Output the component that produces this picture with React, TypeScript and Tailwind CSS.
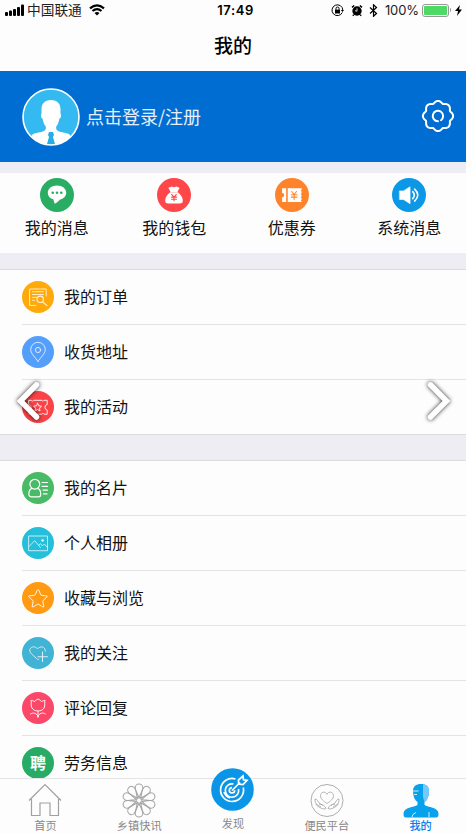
import type { ReactNode } from "react";

const font = "font-['Noto_Sans_CJK_SC',sans-serif]";

function Disc({ color, children }: { color: string; children: ReactNode }) {
  return (
    <svg
      viewBox="0 0 32 32"
      className={`size-8 shrink-0 ${color}`}
      fill="none"
      stroke="white"
      strokeWidth="0.9"
      strokeLinecap="round"
      strokeLinejoin="round"
    >
      <circle cx="16" cy="16" r="16" fill="currentColor" stroke="none" />
      {children}
    </svg>
  );
}

const orders = [
  {
    label: "我的订单",
    icon: (
      <Disc color="text-[#ffaa0a]">
        <g opacity="0.85">
          <path d="M14 24.4H7.6V8h16.6v7M10.5 10.7h11M10.5 13.5h11M10.5 16.4h4M10.5 19.3h2" />
          <circle cx="18.2" cy="18.3" r="3.2" strokeWidth="1.1" />
          <path d="M20.8 21l4.2 3.6" strokeWidth="1.2" />
        </g>
      </Disc>
    ),
  },
  {
    label: "收货地址",
    icon: (
      <Disc color="text-[#549ffb]">
        <g opacity="0.85">
          <path d="M16 25.3C14 22.2 8.7 17.8 8.7 13.6a7.3 7.3 0 0 1 14.6 0C23.3 17.8 18 22.2 16 25.3z" />
          <circle cx="16" cy="14" r="2.6" />
        </g>
      </Disc>
    ),
  },
  {
    label: "我的活动",
    icon: (
      <Disc color="text-[#fb4246]">
        <path d="M7 9.3h2.5l1 1 1-1h8.5l1 1 1-1h3.2v4.2a2.8 2.8 0 0 0 0 5.5v4.2H22l-1-1-1 1h-8.5l-1-1-1 1H7V19a2.8 2.8 0 0 0 0-5.5z" />
        <path d="M15.6 12.3l1.2 2.5 2.7.4-2 2 .5 2.7-2.4-1.3-2.5 1.3.5-2.7-2-2 2.700-.4z" />
      </Disc>
    ),
  },
];

const services = [
  {
    label: "我的名片",
    icon: (
      <Disc color="text-[#49bb66]">
        <circle cx="12.8" cy="12.2" r="4.9" strokeWidth="1.2" />
        <path d="M9.9 16.4c-2.6 1-3.2 3.5-3 6.5.2 1.6 1 1.9 2.4 1.9h7.2c1.5 0 2.2-.5 2.2-2 .2-3-.5-5.5-3-6.4" strokeWidth="1.2" />
        <path d="M20 10.5h5.5M20 14.3h5.5M21 18.1h4.5M21.5 21.9H25" strokeWidth="1.2" />
      </Disc>
    ),
  },
  {
    label: "个人相册",
    icon: (
      <Disc color="text-[#25bfdc]">
        <g opacity="0.8">
          <path d="M7 9h18.5v14.7H7z" />
          <path d="M7 19.5l5.7-5.8 5.7 6.8M16.7 18.3l1.6-1.7 2.2 2.3 1.8-1.8 3.2 3.4" />
          <circle cx="20.6" cy="13.4" r="1" fill="white" />
        </g>
      </Disc>
    ),
  },
  {
    label: "收藏与浏览",
    icon: (
      <Disc color="text-[#ff9a12]">
        <path d="M15.2 8.2q.8-1.5 1.6 0l1.9 4.5q.2.5.8.6l4.9.5q1.5.2.4 1.3l-3.7 3.5q-.4.4-.3.9l1 4.6q.2 1.4-1.1.7l-4.1-2.5q-.6-.3-1.2 0l-4.1 2.5q-1.3.7-1.1-.7l1-4.6q.1-.5-.3-.9l-3.7-3.5q-1.1-1.1.4-1.3l4.9-.5q.6-.1.8-.6z" />
      </Disc>
    ),
  },
  {
    label: "我的关注",
    icon: (
      <Disc color="text-[#41b4d5]">
        <g opacity="0.8">
          <path d="M17 22.3c-.6.5-1 .4-1.6-.1L9.6 17c-4.7-4.2.7-9.6 5-6 .8.6 1.2.6 2 0 3.3-2.6 7.2-.3 6.7 3.3" />
          <path d="M20.500 15v9.500M16 19.800h9.400" strokeWidth="1.1" />
        </g>
      </Disc>
    ),
  },
  {
    label: "评论回复",
    icon: (
      <Disc color="text-[#fb4768]">
        <path d="M12.5 9.5c-1.5-.8-3-1.2-3.6-1.1C10 10 8.3 13.5 10 16c1.3 2 3.3 3 6 3s4.700-1 6-3c1.700-2.500 0-6 1.100-7.600-.6-.1-2.100.3-3.600 1.100C19 9 17.500 7.500 16 7c-1.500.5-3 2-3.500 2.500M16 19v6.500M16 24.500c-1-3-4.500-4.800-7.500-2.500M16 24.500c1-3 4.500-4.800 7.500-2.500" />
      </Disc>
    ),
  },
  {
    label: "劳务信息",
    icon: (
      <div className="flex size-8 shrink-0 items-center justify-center rounded-full bg-[#28ab64] pb-0.5 text-[16px] font-bold leading-none text-white">
        聘
      </div>
    ),
  },
];

const shortcuts = [
  {
    label: "我的消息",
    icon: (
      <Disc color="text-[#28ad62]">
        <path d="M16 7c-5 0-8.700 3-8.700 6.800 0 3 2.100 5.300 5.200 6.300l1.300 4.200c2-1 3.500-2.300 4.700-3.900 3.700-.8 6.200-3.500 6.200-6.600C24.700 10 21 7 16 7z" fill="white" stroke="none" />
        <g className="fill-[#28ad62]" stroke="none">
          <circle cx="12" cy="13.8" r="1.2" />
          <circle cx="16" cy="13.8" r="1.2" />
          <circle cx="20" cy="13.8" r="1.2" />
        </g>
      </Disc>
    ),
  },
  {
    label: "我的钱包",
    icon: (
      <Disc color="text-[#ff4648]">
        <path d="M12 8.600l1.700-.5 2.300.6 2.300-.6 1.700.5c1.500 0 1.500 1 .5 2l-1.300 2.500h-6.400l-1.300-2.500c-1-1-1-2 .5-2zM12.500 13.500h7c3.300 2.500 4.900 5.200 4.800 8-.1 2-1 2.500-3 2.500H10.700c-2 0-3-.5-3-2.500-.1-2.800 1.500-5.500 4.800-8z" fill="white" stroke="none" />
        <path d="M13.800 15.500L16 18l2.200-2.500M13.700 18h4.600M13.700 20h4.600M16 18v3.500" className="stroke-[#ff4648]" strokeWidth="1" />
      </Disc>
    ),
  },
  {
    label: "优惠券",
    icon: (
      <Disc color="text-[#ff832b]">
        <path d="M6.700 9.700h3.800v13H6.700v-4.500a2 2 0 0 0 0-4zM12 9.700h13v1.700l-.9.700.9.700v1.600l-.9.700.9.700v1.600l-.9.700.9.700v1.600l-.9.700.9.700v.9H12z" fill="white" stroke="none" />
        <path d="M15.700 12.700l2.300 2.800 2.300-2.800M15.400 15.700h5.200M15.400 18h5.200M18 15.500v4.700" className="stroke-[#ff832b]" strokeWidth="1" />
      </Disc>
    ),
  },
  {
    label: "系统消息",
    icon: (
      <Disc color="text-[#0c98e7]">
        <path d="M7.300 12.200h3.500L17 8.300v15.900l-6.200-4H7.300z" fill="white" strokeWidth="0.6" />
        <path d="M19.500 12.800q3 3.300 0 6.600M21.300 10.500q6 5.600 0 11.200" strokeWidth="1.5" />
      </Disc>
    ),
  },
];

// Outline of the settings gear: eight rounded lobes around the centre.
const gear = Array.from({ length: 161 }, (_, i) => {
  const a = (i / 160) * Math.PI * 2;
  const r = 12 + 3.1 * Math.sqrt(Math.cos(4 * a) ** 2 * 0.9 + 0.1);
  return `${(17 + r * Math.sin(a)).toFixed(2)},${(17 - r * Math.cos(a)).toFixed(2)}`;
}).join(" ");

function StatusBar() {
  return (
    <div className="flex h-5 shrink-0 items-center justify-between pr-1 pl-[5px] text-black">
      <div className="flex w-[190px] items-center">
        <svg viewBox="0 0 19 12" className="h-3 w-[19px]">
          <rect x="0" y="8" width="3" height="4" rx="1" />
          <rect x="4" y="6.5" width="3" height="5.5" rx="1" />
          <rect x="8" y="5" width="3" height="7" rx="1" />
          <rect x="12" y="3" width="3" height="9" rx="1" />
          <rect x="16" y="0.5" width="3" height="11.5" rx="1" />
        </svg>
        <span className="-mt-0.5 ml-[3px] text-[13.7px] leading-5 text-[#222]">中国联通</span>
        <svg viewBox="0 0 16 12" className="ml-[7px] h-3 w-4" fill="none" stroke="black" strokeWidth="2.2">
          <path d="M1 4.300Q8-1.700 15 4.300M3.500 7Q8 3.200 12.500 7" />
          <path d="M5.500 9L8 11.500 10.500 9Q8 7 5.500 9z" fill="black" stroke="none" />
        </svg>
      </div>
      <span className="ml-1 font-['Inter',sans-serif] text-[13px] font-semibold tracking-[0.6px] leading-5">17:49</span>
      <div className="flex w-[190px] items-center justify-end">
        <svg viewBox="0 0 13 13" className="size-[13px]" fill="none" stroke="black">
          <path d="M11.300 8.500a5.400 5.400 0 1 1 .5-2.500" />
          <path d="M9.800 6h3.200l-1.500 2z" fill="black" stroke="none" />
          <rect x="4" y="5.700" width="5" height="3.800" fill="black" stroke="none" />
          <path d="M5 6V4.500a1.500 1.500 0 0 1 3 0V6" />
        </svg>
        <svg viewBox="0 0 12 13" className="ml-[7px] h-[13px] w-3" fill="none" stroke="black">
          <circle cx="6" cy="7" r="4.700" fill="black" stroke="none" />
          <path d="M1 3.300L3.200 1.500M8.800 1.500L11 3.300M2.700 10.800l-.8.900M9.300 10.800l.8.900" strokeWidth="1.6" />
          <path d="M6 4.300v3l-2-.7" stroke="white" strokeWidth="0.8" />
        </svg>
        <svg viewBox="0 0 9 13" className="ml-[6px] h-[13px] w-[9px]" fill="none" stroke="black" strokeWidth="1.2">
          <path d="M1 3.500l6.500 6-3 2.800V.8l3 2.700-6.500 6" />
        </svg>
        <span className="ml-[7px] font-['Inter',sans-serif] text-[13px] leading-5 tracking-[-0.1px] text-[#222]">100%</span>
        <div className="ml-[3px] h-[13px] w-[27px] rounded-[3px] border border-[#999] p-[1px]">
          <div className="h-full rounded-[1px] bg-[#4cd964]" />
        </div>
        <div className="ml-px h-1 w-px rounded-r bg-[#999]" />
        <svg viewBox="0 0 7 11" className="ml-1 h-[11px] w-[7px]">
          <path d="M5 0L0 6h3L2 11l5-6.500H4z" />
        </svg>
      </div>
    </div>
  );
}

function Rows({ items }: { items: { label: string; icon: ReactNode }[] }) {
  return (
    <div className="border-t border-[#dcdce0] pl-[22px]">
      {items.map((item, i) => (
        <div
          key={item.label}
          className={`flex h-[55px] items-center gap-2.5 border-b ${i < items.length - 1 ? "border-[#e4e4e6]" : "border-transparent"}`}
        >
          {item.icon}
          <span className="-mt-0.5 text-[16px] leading-6 text-[#111]">{item.label}</span>
        </div>
      ))}
    </div>
  );
}

function Tab({ label, children, active, raised }: { label: string; children: ReactNode; active?: boolean; raised?: boolean }) {
  return (
    <div className={`flex flex-col items-center ${raised ? "-mt-[11px]" : "mt-1"}`}>
      {children}
      <span
        className={`text-[11.2px] leading-4 ${raised ? "mt-1" : "-mt-px"} ${active ? "font-medium text-[#0a7cec]" : "text-[#888]"}`}
      >
        {label}
      </span>
    </div>
  );
}

function TabBar() {
  return (
    <div className="relative h-[55px] shrink-0 border-t border-[#e5e5e7] bg-[#fdfdfd]">
      <div className="-mx-[1.5px] grid grid-cols-5">
        <Tab label="首页">
          <svg viewBox="0 0 34 35" className="h-[35px] w-[34px]" fill="none" stroke="#a0a0a0" strokeWidth="1.2">
            <path d="M1 17.500L17 1.500l16 16M3.500 16v16.500H12V20h10v12.500h8.500V16" />
          </svg>
        </Tab>
        <Tab label="乡镇快讯">
          <svg viewBox="0 0 36 35" className="h-[35px] w-9" fill="none" stroke="#a5a5a5" strokeWidth="1.1">
            {[0, 36, 72, 108, 144, 180, 216, 252, 288, 324].map((a) => (
              <path
                key={a}
                d="M18 15.500C17.500 11.500 14.200 9 14.200 4.800a3.800 3.800 0 0 1 7.600 0C21.800 9 18.500 11.500 18 15.500z"
                transform={`rotate(${a} 18 17.500)`}
              />
            ))}
          </svg>
        </Tab>
        <Tab label="发现" raised>
          <svg viewBox="0 0 43 43" className="h-[43px] w-[43px]" fill="none" stroke="white" strokeWidth="1.7">
            <circle cx="21.500" cy="21.500" r="21.300" fill="#0b95e6" stroke="none" />
            <path d="M24.500 11a11.500 11.500 0 1 0 7.800 8.500M22.500 16a6.700 6.700 0 1 0 5 5M21 19.600a2.700 2.700 0 1 0 2.700 2.700M21 22.500l8-8M27.500 16v-4l4.500-4 .5 3.800 3.500.6-4 4.200zM13 24q1.500 4.500 6 6" />
          </svg>
        </Tab>
        <Tab label="便民平台">
          <svg viewBox="0 0 34 35" className="h-[35px] w-[34px]" fill="none" stroke="#999" strokeWidth="0.7">
            <circle cx="17" cy="17.500" r="16" strokeWidth="0.8" />
            <path d="M17 20.500c-3.500-2.500-6.500-4.500-6.500-7.700 0-4 5-5 6.500-1.500 1.500-3.500 6.500-2.500 6.500 1.500 0 3.200-3 5.200-6.500 7.700z" />
            <path d="M5 16c0 5 2 8.500 9 10l2-.5c-1-3-3.500-4-7-4.500M5 16c2 0 3 2 4 4l4 2.500M29 16c0 5-2 8.500-9 10l-2-.5c1-3 3.500-4 7-4.500M29 16c-2 0-3 2-4 4l-4 2.500M6 21l5 3M28 21l-5 3" />
          </svg>
        </Tab>
        <Tab label="我的" active>
          <svg viewBox="0 0 36 35" className="h-[35px] w-9">
            <path d="M18 1c-5 0-8 2.500-8 7 0 5 1.500 9 4.500 11v3C11 24.500 1 24 .5 30.500.5 33 1 34.500 3 34.500h30c2 0 2.500-1.500 2.500-4C35 24 25 24.500 21.500 22v-3c3-2 4.500-6 4.500-11 0-4.500-3-7-8-7z" fill="#08a2ec" />
            <path d="M20 1.200c4 .3 6 2.800 6 6.800 0 5-1.500 9-4.500 11L20 14z" fill="#74c9fa" />
            <path d="M10 8h5.500M11 11.500h3M9 34q0-3 4-4.500M26 29v5" stroke="white" strokeWidth="0.8" fill="none" />
          </svg>
        </Tab>
      </div>
    </div>
  );
}

function Arrow({ flip }: { flip?: boolean }) {
  return (
    <svg
      viewBox="0 0 28 44"
      className={`h-11 w-7 drop-shadow-[0_0_2px_rgba(0,0,0,0.85)] ${flip ? "-scale-x-100" : ""}`}
      fill="none"
      stroke="white"
      strokeWidth="5.5"
      strokeLinecap="round"
    >
      <path d="M22.500 5.800L6.500 22 22.500 38" />
    </svg>
  );
}

export default function App() {
  return (
    <div className={`relative flex h-[833px] w-[466px] flex-col overflow-hidden bg-[#fdfdfd] ${font}`}>
      <StatusBar />
      <h1 className="flex h-[51px] shrink-0 items-center justify-center pb-px text-[19px] font-medium text-black">我的</h1>
      <header className="flex h-[91px] shrink-0 items-center bg-[#006dd2] pr-[11px] pl-[22px]">
        <svg viewBox="0 0 58 58" className="size-[58px]">
          <defs>
            <clipPath id="avatar">
              <circle cx="29" cy="29" r="28" />
            </clipPath>
          </defs>
          <circle cx="29" cy="29" r="28" fill="#34baf0" />
          <g clipPath="url(#avatar)">
            <path d="M29 12c-6.500 0-9.500 4-9.500 9v5c-1 .5-.5 4 1 4.500.8 4 2 6.500 3.300 8v2.500C22 45 15 44 11 46Q8 48 8 58h42q0-10-3-12c-4-2-11-1-12.800-5v-2.500c1.300-1.500 2.500-4 3.300-8 1.500-.5 2-4 1-4.500v-5c0-5-3-9-9.500-9z" fill="white" />
            <path d="M27 44h4l1 3-1 2 2 7-4 2-4-2 2-7-1-2z" fill="#24aee5" />
          </g>
          <circle cx="29" cy="29" r="28" fill="none" stroke="white" strokeWidth="1.6" />
        </svg>
        <span className="-mt-0.5 flex-1 pl-1.5 text-[18px] leading-6 text-white/90">点击登录/注册</span>
        <svg viewBox="0 0 34 34" className="-mt-0.5 size-[34px]" fill="none" stroke="white" strokeWidth="2" strokeLinecap="round" strokeLinejoin="round">
          <polygon points={gear} />
          <path d="M20 21.200a5.200 5.200 0 1 0-3 1" />
        </svg>
      </header>
      <div className="h-[11px] shrink-0 bg-[#eeedf3]" />
      <section className="-mx-0.5 grid h-20 shrink-0 grid-cols-4 pt-1">
        {shortcuts.map((s) => (
          <div key={s.label} className="flex flex-col items-center">
            <div className="flex size-[35px] items-center justify-center *:size-[34px]">{s.icon}</div>
            <span className="mt-[3px] text-[16px] leading-6 text-[#111]">{s.label}</span>
          </div>
        ))}
      </section>
      <div className="h-4 shrink-0 bg-[#eeedf3]" />
      <main className="min-h-0 flex-1 overflow-hidden">
        <Rows items={orders} />
        <div className="-mt-px h-[26px] border-t border-[#dcdce0] bg-[#eeedf3]" />
        <Rows items={services} />
      </main>
      <TabBar />
      <button aria-label="prev" className="absolute top-[379px] left-[14px]">
        <Arrow />
      </button>
      <button aria-label="next" className="absolute top-[379px] right-[13px]">
        <Arrow flip />
      </button>
    </div>
  );
}
